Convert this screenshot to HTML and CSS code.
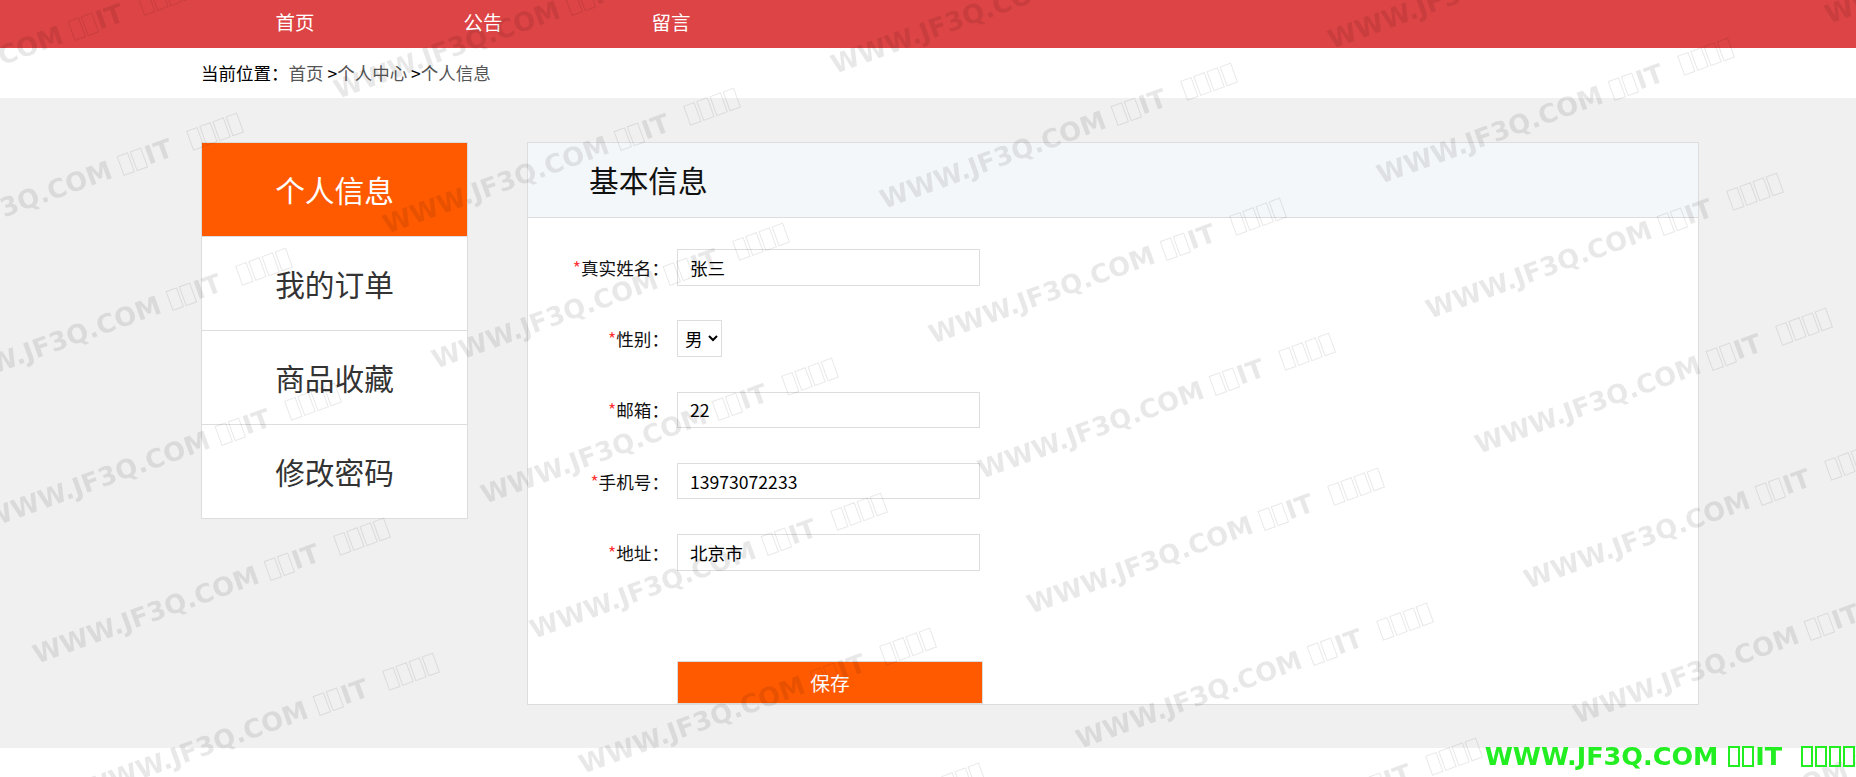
FILE: index.html
```html
<!DOCTYPE html>
<html lang="zh-CN">
<head>
  <meta charset="UTF-8">
  <title>个人信息</title>
  <link rel="stylesheet" href="styles.css">
</head>
<body>
  <div class="topbar">
    <ul class="nav wrap">
      <li><a href="#">首页</a></li>
      <li><a href="#">公告</a></li>
      <li><a href="#">留言</a></li>
    </ul>
  </div>

  <div class="crumb">
    <div class="wrap">当前位置：<a href="#">首页</a> &gt;<a href="#">个人中心</a> &gt;<a href="#">个人信息</a></div>
  </div>

  <div class="main">
    <div class="wrap content">
      <ul class="side">
        <li class="on"><a href="#">个人信息</a></li>
        <li><a href="#">我的订单</a></li>
        <li><a href="#">商品收藏</a></li>
        <li><a href="#">修改密码</a></li>
      </ul>

      <div class="panel">
        <div class="panel-hd"><h2>基本信息</h2></div>
        <form class="panel-bd">
          <div class="row">
            <label><em>*</em>真实姓名：</label>
            <input type="text" value="张三">
          </div>
          <div class="row">
            <label><em>*</em>性别：</label>
            <select>
              <option>男</option>
              <option>女</option>
            </select>
          </div>
          <div class="row">
            <label><em>*</em>邮箱：</label>
            <input type="text" value="22">
          </div>
          <div class="row">
            <label><em>*</em>手机号：</label>
            <input type="text" value="13973072233">
          </div>
          <div class="row">
            <label><em>*</em>地址：</label>
            <input type="text" value="北京市">
          </div>
          <div class="btn-row">
            <button type="button" class="btn-save">保存</button>
          </div>
        </form>
      </div>
    </div>
  </div>

  <div class="footer"></div>

  <div class="wm-layer" id="wm"></div>
  <div class="wm-tag">WWW.JF3Q.COM <i></i><i></i>IT&nbsp;&nbsp;<i></i><i></i><i></i><i></i></div>

  <script>
    // watermark tiles
    var layer = document.getElementById('wm');
    var html = '';
    for (var r = -7; r <= 2; r++) {
      for (var c = -1; c <= 5; c++) {
        var x = 37 + c * 497 + r * 49;
        var y = 664 - c * 25 + r * 135;
        html += '<span class="wm-item" style="left:' + x + 'px;top:' + (y - 22) + 'px">WWW.JF3Q.COM <i></i><i></i>IT&nbsp;&nbsp;<i></i><i></i><i></i><i></i></span>';
      }
    }
    layer.innerHTML = html;
  </script>
</body>
</html>
```

FILE: styles.css
```css
* { margin: 0; padding: 0; box-sizing: border-box; }
body { font-family: "Noto Sans CJK SC", "Noto Sans", sans-serif; color: #000; background: #fff; }
ul { list-style: none; }
a { color: inherit; text-decoration: none; }
.wrap { width: 1498px; margin-left: 201px; }

.topbar { height: 48px; background: #dd4445; }
.nav { display: flex; }
.nav li { width: 188px; text-align: center; line-height: 44px; font-size: 19.5px; color: #fff; }

.crumb { height: 50px; line-height: 50px; font-size: 17.5px; background: #fff; }
.crumb a { color: #555; }

.main { background: #f0f0f0; padding: 44px 0 43px; }
.content { display: flex; align-items: flex-start; }

.side { width: 267px; border: 1px solid #ddd; background: #fff; }
.side li { height: 94px; line-height: 93px; text-align: center; font-size: 29.7px; color: #333; }
.side li + li { border-top: 1px solid #ddd; }
.side li.on { height: 93px; background: #ff5a00; color: #fff; }

.panel { width: 1172px; margin-left: 59px; border: 1px solid #ddd; background: #fff; }
.panel-hd { height: 75px; border-bottom: 1px solid #ddd; background: #f4f7fa; }
.panel-hd h2 { font-size: 29.7px; font-weight: normal; line-height: 74px; padding-left: 61px; color: #111; }
.panel-bd { padding-top: 31px; }

.row { display: flex; align-items: center; height: 36.6px; margin-bottom: 34.7px; }
.row label { width: 141px; margin-right: 8px; text-align: right; font-size: 17.6px; color: #111; }
.row label em { font-style: normal; color: #f33; }
.row input { width: 303px; height: 36.6px; border: 1px solid #ddd; padding: 0 12px; font: inherit; font-size: 17.6px; color: #000; outline: none; }
.row select { width: 45px; height: 37px; border: 1px solid #ddd; background: #fff; padding-left: 3px; font: inherit; font-size: 17.6px; color: #000; }

.btn-row { margin: 90px 0 0 149px; height: 43px; }
.btn-save { display: block; width: 306px; height: 43px; border: 1px solid #ddd; background: #ff5a00; color: #fff; font: inherit; font-size: 19.8px; cursor: pointer; }

.footer { height: 29px; background: #fff; }

.wm-layer { position: fixed; top: 0; left: 0; right: 0; bottom: 0; overflow: hidden; pointer-events: none; z-index: 1000; }
.wm-item { position: absolute; white-space: nowrap; font-family: "DejaVu Sans", sans-serif; font-weight: bold; font-size: 26px; line-height: 26px; color: rgba(0, 0, 0, 0.09); transform-origin: 0 22px; transform: rotate(-20deg); }
.wm-item i { display: inline-block; width: 12px; height: 21px; margin: 0 1px; border: 1px solid currentColor; vertical-align: -2px; }

.wm-tag { position: fixed; right: 0; bottom: 8px; z-index: 1001; white-space: nowrap; font-family: "DejaVu Sans", sans-serif; font-weight: bold; font-size: 25.5px; line-height: 25.5px; color: #22ee22; pointer-events: none; }
.wm-tag i { display: inline-block; width: 12px; height: 21px; margin: 0 1px; border: 2px solid currentColor; vertical-align: -2px; }
```
